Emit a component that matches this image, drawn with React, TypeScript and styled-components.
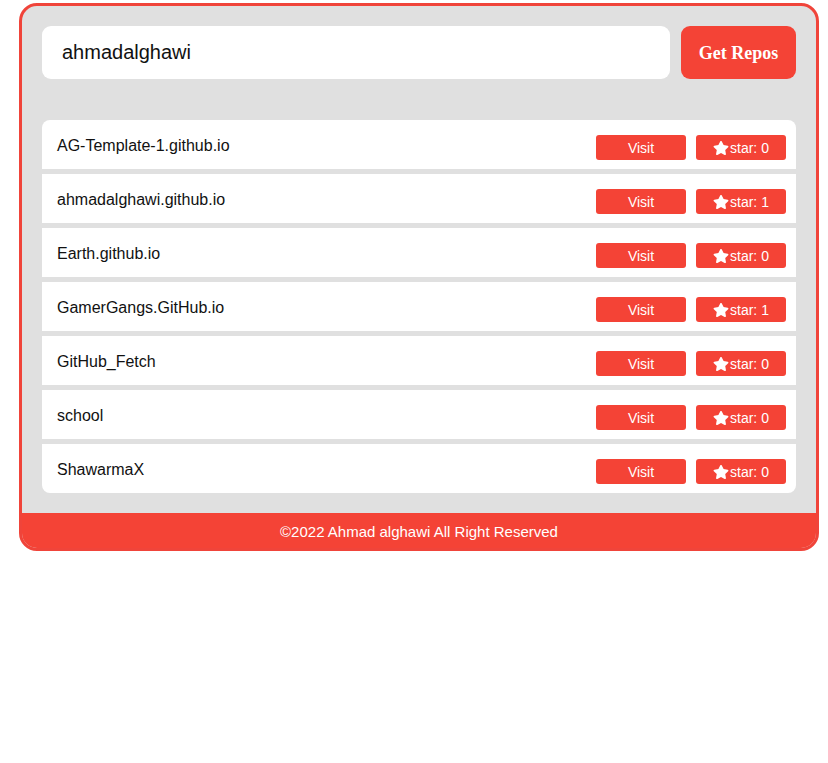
import React, {useState} from 'react';
import styled, {createGlobalStyle} from 'styled-components';
import {FaStar} from 'react-icons/fa';

interface IRepo {
    name: string;
    stars: number;
}

const repos: IRepo[] = [
    {name: 'AG-Template-1.github.io', stars: 0},
    {name: 'ahmadalghawi.github.io', stars: 1},
    {name: 'Earth.github.io', stars: 0},
    {name: 'GamerGangs.GitHub.io', stars: 1},
    {name: 'GitHub_Fetch', stars: 0},
    {name: 'school', stars: 0},
    {name: 'ShawarmaX', stars: 0},
];

const GlobalStyle = createGlobalStyle`
  body {
    margin: 0;
    background: #ffffff;
    font-family: "Liberation Sans", Arial, sans-serif;
  }
`;

const StyledContainer = styled.div`
  box-sizing: border-box;
  width: 800px;
  margin: 3px 0 0 19px;
  border: 3px solid #f0443a;
  border-radius: 18px;
  background: #e0e0e0;
  overflow: hidden;
`;

const StyledMain = styled.div`
  padding: 20px;
`;

const StyledSearchBar = styled.div`
  display: flex;
  gap: 11px;
  height: 53px;
`;

const StyledInput = styled.input`
  flex: 1;
  border: none;
  outline: none;
  border-radius: 9px;
  background: #ffffff;
  padding: 0 20px;
  font-family: "Liberation Sans", Arial, sans-serif;
  font-size: 20px;
  color: #111111;
`;

const StyledGetButton = styled.button`
  width: 115px;
  border: none;
  border-radius: 9px;
  background: #f44336;
  color: #ffffff;
  font-family: "Liberation Serif", "Times New Roman", serif;
  font-weight: bold;
  font-size: 18px;
  padding-top: 2px;
  cursor: pointer;
`;

const StyledList = styled.div`
  display: flex;
  flex-direction: column;
  gap: 5px;
  margin-top: 41px;
  border-radius: 8px;
  overflow: hidden;
`;

const StyledRow = styled.div`
  display: flex;
  align-items: center;
  height: 49px;
  background: #ffffff;
  padding: 0 10px 0 15px;
`;

const StyledName = styled.span`
  flex: 1;
  font-size: 16px;
  color: #111111;
  padding-top: 3px;
`;

const StyledActions = styled.div`
  display: flex;
  gap: 10px;
  padding-top: 6px;
`;

const StyledSmallButton = styled.button`
  display: flex;
  align-items: center;
  justify-content: center;
  width: 90px;
  height: 25px;
  border: none;
  border-radius: 3px;
  background: #f44336;
  color: #ffffff;
  font-family: "Liberation Sans", Arial, sans-serif;
  font-size: 14px;
  padding: 0;
  cursor: pointer;

  svg {
    margin-right: 1px;
  }
`;

const StyledFooter = styled.footer`
  background: #f44336;
  color: #ffffff;
  text-align: center;
  height: 35px;
  line-height: 37px;
  font-size: 15px;
`;

const App: React.FC = () => {
    const [query, setQuery] = useState('ahmadalghawi');

    return (
        <>
            <GlobalStyle/>
            <StyledContainer>
                <StyledMain>
                    <StyledSearchBar>
                        <StyledInput
                            value={query}
                            onChange={(e) => setQuery(e.target.value)}
                        />
                        <StyledGetButton>Get Repos</StyledGetButton>
                    </StyledSearchBar>
                    <StyledList>
                        {repos.map((repo) => (
                            <StyledRow key={repo.name}>
                                <StyledName>{repo.name}</StyledName>
                                <StyledActions>
                                    <StyledSmallButton>Visit</StyledSmallButton>
                                    <StyledSmallButton>
                                        <FaStar size={16}/>
                                        star: {repo.stars}
                                    </StyledSmallButton>
                                </StyledActions>
                            </StyledRow>
                        ))}
                    </StyledList>
                </StyledMain>
                <StyledFooter>©2022 Ahmad alghawi All Right Reserved</StyledFooter>
            </StyledContainer>
        </>
    );
};

export default App;
